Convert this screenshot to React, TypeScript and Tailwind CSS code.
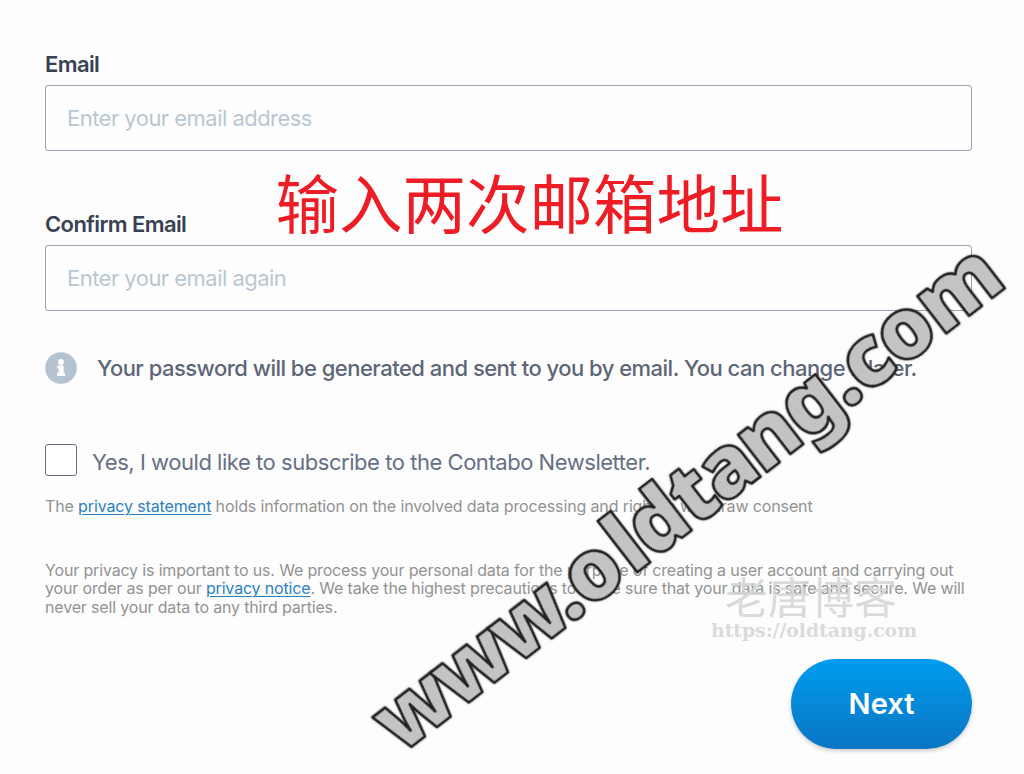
import type { ReactNode } from "react";

const FIELDS = [
  { id: "email", label: "Email", placeholder: "Enter your email address" },
  { id: "confirm-email", label: "Confirm Email", placeholder: "Enter your email again" },
] as const;

function TextLink({ children }: { children: ReactNode }) {
  return (
    <a href="#" className="text-[#2b7fc1] underline decoration-1 underline-offset-2">
      {children}
    </a>
  );
}

function InfoIcon() {
  return (
    <svg width="32" height="32" viewBox="0 0 32 32" aria-hidden="true">
      <circle cx="16" cy="16" r="15.8" fill="#b4c3cf" />
      <circle cx="16" cy="10" r="2.9" fill="#fff" />
      <path d="M12.3 13.4h6.4v7.4h1.4v3.2h-8v-3.2h1.6v-4.2h-1.4z" fill="#fff" />
    </svg>
  );
}

// Decorative overlays, never clickable
function Watermarks() {
  return (
    <>
      <div className="pointer-events-none absolute left-[275.5px] top-[153px] whitespace-nowrap font-['Noto_Sans_CJK_SC',sans-serif] text-[63.5px] leading-[94px] text-[#ee1c25]">
        输入两次邮箱地址
      </div>
      <div className="pointer-events-none absolute left-[725px] top-[565px] whitespace-nowrap font-['Noto_Sans_CJK_SC',sans-serif] text-[43px] leading-[60px] text-[#d3d5d5]/85">
        老唐博客
      </div>
      <svg className="pointer-events-none absolute inset-0" width="1024" height="774" aria-hidden="true">
        <text
          x="711"
          y="637"
          textLength="206"
          lengthAdjust="spacingAndGlyphs"
          fontFamily="DejaVu Serif, serif"
          fontWeight="700"
          fontSize="18"
          fill="#d9dbdb"
        >
          https://oldtang.com
        </text>
        <text
          transform="translate(400.5 755.3) rotate(-37.7)"
          dx="0 -2.8 -2.8 -2.6 0 5 0 -0.5 -0.5 -1 0 0 0 0 1"
          fontFamily="Noto Sans, sans-serif"
          fontWeight="900"
          fontSize="85"
          letterSpacing="-2.1"
          strokeWidth="2.6"
          strokeLinejoin="round"
          fill="#c3c3c3"
          stroke="#222"
          className="drop-shadow-[0_0_1px_rgba(0,0,0,0.35)]"
        >
          www.oldtang.com
        </text>
      </svg>
    </>
  );
}

export default function App() {
  return (
    <main className="relative h-[774px] w-[1024px] overflow-hidden bg-[#fdfdfd] pl-[45px] pr-[52px] pt-[50px] font-['Inter',sans-serif]">
      <form className="flex flex-col" onSubmit={(e) => e.preventDefault()}>
        {FIELDS.map((field) => (
          <div key={field.id} className="mb-[59px] flex h-[101px] flex-col">
            <label
              htmlFor={field.id}
              className="h-[35px] text-[22px] font-semibold leading-7 tracking-[-0.6px] text-[#374151]"
            >
              {field.label}
            </label>
            <input
              id={field.id}
              type="email"
              placeholder={field.placeholder}
              className="h-[66px] w-[927px] rounded-[3px] border border-[#98a2b3] bg-[#fefefe] px-[21px] text-[22px] tracking-[-0.53px] placeholder:text-[#b9c7d3]"
            />
          </div>
        ))}

        <p className="-mt-[18px] flex h-8 items-center gap-5 whitespace-nowrap text-[22px] font-medium tracking-[-0.52px] text-[#5d6677]">
          <InfoIcon />
          Your password will be generated and sent to you by email. You can change it later.
        </p>

        <label className="mt-[60px] flex h-8 items-start gap-[15px] whitespace-nowrap text-[22px] leading-9 tracking-[-0.46px] text-[#667085]">
          <input type="checkbox" className="size-8 appearance-none rounded-[3px] border border-[#667085] bg-white" />
          Yes, I would like to subscribe to the Contabo Newsletter.
        </label>

        <p className="mt-[20px] whitespace-nowrap text-base leading-5 tracking-[-0.13px] text-[#929292]">
          The <TextLink>privacy statement</TextLink> holds information on the involved data processing and
          right to withdraw consent
        </p>

        <p className="mt-[45px] whitespace-nowrap text-base leading-[18.4px] tracking-[-0.16px] text-[#929292]">
          Your privacy is important to us. We process your personal data for the purpose of creating a user account and carrying out
          <br />
          your order as per our <TextLink>privacy notice</TextLink>. We take the highest precautions to make
          sure that your data is safe and secure. We will
          <br />
          never sell your data to any third parties.
        </p>

        <button
          type="submit"
          className="mt-[43px] h-[90px] w-[181px] self-end rounded-full bg-linear-to-b from-[#009cee] to-[#0a76c2] text-[29px] font-semibold text-white shadow-[0_2px_4px_rgba(0,0,0,0.2)]"
        >
          Next
        </button>
      </form>
      <Watermarks />
    </main>
  );
}
